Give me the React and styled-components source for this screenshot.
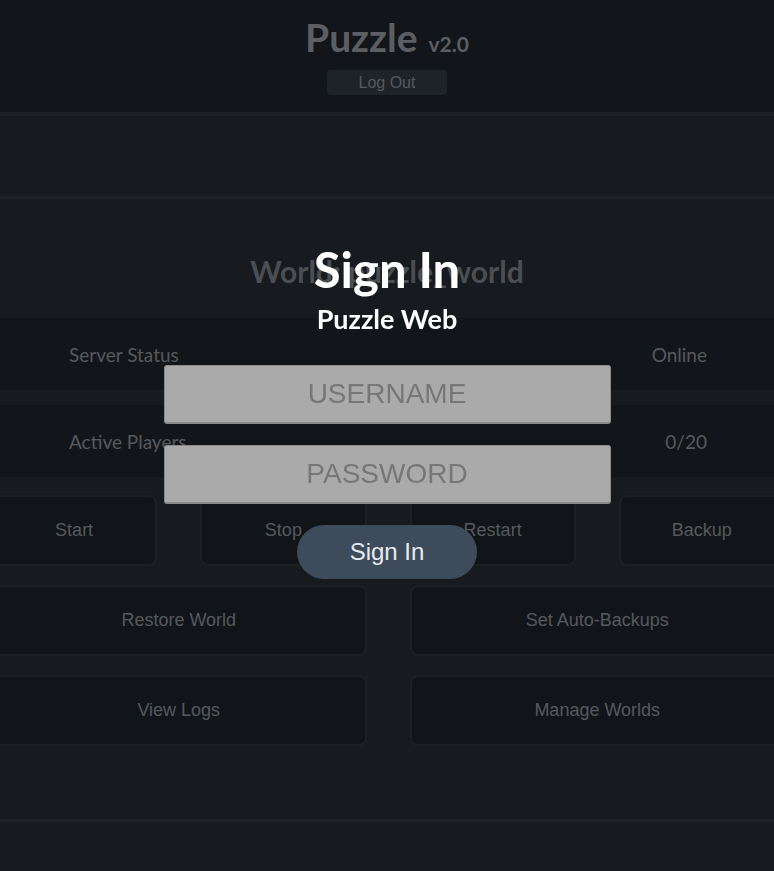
import React from "react";
import styled, { createGlobalStyle } from "styled-components";

const GlobalStyle = createGlobalStyle`
  body {
    margin: 0;
    background-color: #2e343c;
    font-family: "Lato", "Open Sans", sans-serif;
    overflow: hidden;
  }
`;

const Page = styled.div`
  min-height: 871px;
  background-color: #2e343c;
`;

const Header = styled.header`
  height: 116px;
  background-color: #242a32;
  border-bottom: 4px solid #3a424c;
  display: flex;
  flex-direction: column;
  align-items: center;
  padding-top: 14px;
  box-sizing: border-box;
`;

const Title = styled.h1`
  margin: 0;
  color: #b6bcc4;
  font-size: 39px;
  font-weight: 700;
  line-height: 46px;
`;

const Version = styled.span`
  font-size: 21px;
  margin-left: 11px;
`;

const LogOutButton = styled.button`
  margin-top: 3px;
  width: 120px;
  height: 25px;
  border: none;
  border-radius: 4px;
  background-color: #3c4654;
  color: #aab0b8;
  font-family: "Liberation Sans", Arial, sans-serif;
  font-size: 16px;
`;

const Strip = styled.section`
  height: 80px;
  border-bottom: 3px solid #3a424c;
`;

const Main = styled.main`
  padding-top: 50px;
  height: 623px;
  box-sizing: border-box;
  border-bottom: 3px solid #3a424c;
`;

const WorldTitle = styled.h2`
  margin: 0 0 25px;
  text-align: center;
  color: #969ca4;
  font-size: 30px;
  font-weight: 700;
  line-height: 44px;
`;

const StatRow = styled.div`
  height: 72px;
  margin-bottom: 15px;
  padding: 0 67px 0 69px;
  display: flex;
  align-items: center;
  justify-content: space-between;
  background-color: #242a32;
  color: #aab0b8;
  font-size: 19px;
`;

const Actions = styled.div`
  margin: 18px -11px 0 -9px;
  display: grid;
  grid-template-columns: repeat(4, 1fr);
  column-gap: 43px;
  row-gap: 19px;
`;

const ActionButton = styled.button`
  grid-column: span ${(props) => props.span || 1};
  height: 71px;
  border: 2px solid #383f48;
  border-radius: 8px;
  background-color: #222830;
  color: #aab0b8;
  font-family: "Liberation Sans", Arial, sans-serif;
  font-size: 18px;
`;

const Overlay = styled.div`
  position: fixed;
  inset: 0;
  background-color: rgba(0, 0, 0, 0.5);
  display: flex;
  flex-direction: column;
  align-items: center;
  padding-top: 240px;
`;

const ModalTitle = styled.h2`
  margin: 0;
  color: #ffffff;
  font-size: 49px;
  font-weight: 700;
  line-height: 58px;
`;

const ModalSubtitle = styled.h3`
  margin: 5px 0 30px;
  color: #ffffff;
  font-size: 27px;
  font-weight: 700;
  line-height: 32px;
`;

const Input = styled.input`
  width: 447px;
  height: 59px;
  margin-bottom: 21px;
  box-sizing: border-box;
  border: 1px solid #8a8a8a;
  border-bottom-width: 2px;
  border-radius: 3px;
  background-color: #aaaaaa;
  text-align: center;
  font-family: "Liberation Sans", Arial, sans-serif;
  font-size: 28px;
  color: #333;
  outline: none;

  &::placeholder {
    color: #777777;
  }
`;

const SubmitButton = styled.button`
  width: 180px;
  height: 54px;
  border: none;
  border-radius: 27px;
  background-color: #3e4b5b;
  color: #e6ebf1;
  font-family: "Liberation Sans", Arial, sans-serif;
  font-size: 24px;
`;

export default function App() {
  return (
    <>
      <GlobalStyle />
      <Page>
        <Header>
          <Title>
            Puzzle<Version>v2.0</Version>
          </Title>
          <LogOutButton>Log Out</LogOutButton>
        </Header>
        <Strip />
        <Main>
          <WorldTitle>World: puzzle_world</WorldTitle>
          <StatRow>
            <span>Server Status</span>
            <span>Online</span>
          </StatRow>
          <StatRow>
            <span>Active Players</span>
            <span>0/20</span>
          </StatRow>
          <Actions>
            <ActionButton>Start</ActionButton>
            <ActionButton>Stop</ActionButton>
            <ActionButton>Restart</ActionButton>
            <ActionButton>Backup</ActionButton>
            <ActionButton span={2}>Restore World</ActionButton>
            <ActionButton span={2}>Set Auto-Backups</ActionButton>
            <ActionButton span={2}>View Logs</ActionButton>
            <ActionButton span={2}>Manage Worlds</ActionButton>
          </Actions>
        </Main>
      </Page>
      <Overlay>
        <ModalTitle>Sign In</ModalTitle>
        <ModalSubtitle>Puzzle Web</ModalSubtitle>
        <Input placeholder="USERNAME" />
        <Input type="password" placeholder="PASSWORD" />
        <SubmitButton>Sign In</SubmitButton>
      </Overlay>
    </>
  );
}
